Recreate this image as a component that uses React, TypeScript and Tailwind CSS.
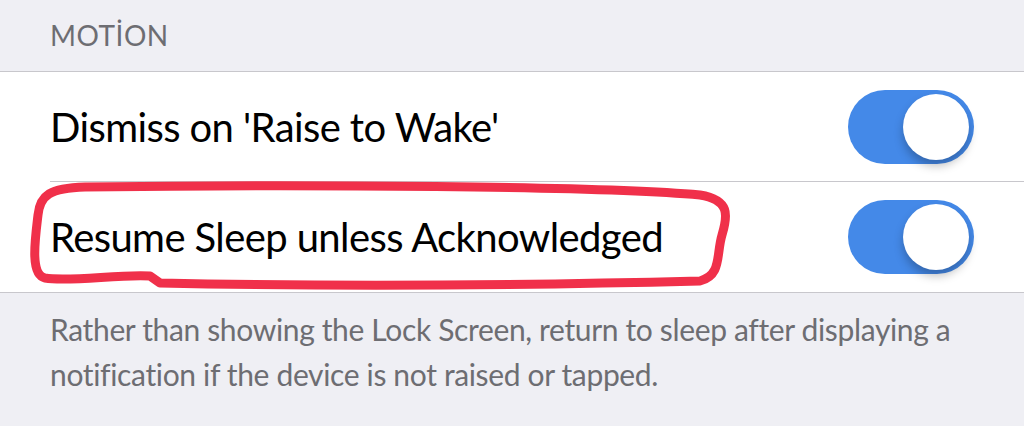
import React from "react";

function Toggle() {
  return (
    <div className="relative w-[126px] h-[74px] rounded-full bg-[#4489e8]">
      <div className="absolute right-[5px] top-[4px] w-[66px] h-[66px] rounded-full bg-white shadow-[0_6px_10px_rgba(0,0,0,0.25)]" />
    </div>
  );
}

function Row({ label, divider }: { label: string; divider?: boolean }) {
  return (
    <div className="flex h-[110px] items-center pl-[50px]">
      <div
        className={
          "flex h-full flex-1 items-center justify-between pr-[50px] " +
          (divider ? "border-b border-[#c8c7cc]" : "")
        }
      >
        <span className="text-[40px] tracking-[-0.6px] text-black">{label}</span>
        <Toggle />
      </div>
    </div>
  );
}

export default function App() {
  return (
    <div className="relative w-[1024px] h-[426px] overflow-hidden bg-[#efeff4] font-['Lato',sans-serif]">
      {/* Section header */}
      <div className="h-[71px] pl-[50px] pt-[14px] text-[28px] tracking-[0.5px] text-[#6d6d72]">
        MOTİON
      </div>

      {/* Toggle group */}
      <div className="border-y border-[#c8c7cc] bg-white">
        <Row label="Dismiss on 'Raise to Wake'" divider />
        <Row label="Resume Sleep unless Acknowledged" />
      </div>

      {/* Footer note */}
      <p className="px-[50px] pt-[14px] text-[30px] leading-[45px] tracking-[-0.35px] text-[#6d6d72]">
        Rather than showing the Lock Screen, return to sleep after displaying a
        notification if the device is not raised or tapped.
      </p>

      {/* Red hand-drawn annotation */}
      <svg
        className="absolute left-0 top-0 pointer-events-none"
        width="1024"
        height="426"
        viewBox="0 0 1024 426"
      >
        <path
          d="M 85 187 C 300 184, 600 186, 700 195 C 730 200, 728 215, 722 235 C 716 255, 722 275, 700 281 C 500 286, 300 286, 160 283 L 150 276 C 120 274, 70 282, 45 278 C 30 275, 35 240, 38 215 C 40 195, 50 188, 85 187"
          fill="none"
          stroke="#f0304a"
          strokeWidth="9"
          strokeLinecap="round"
          strokeLinejoin="round"
        />
      </svg>
    </div>
  );
}
